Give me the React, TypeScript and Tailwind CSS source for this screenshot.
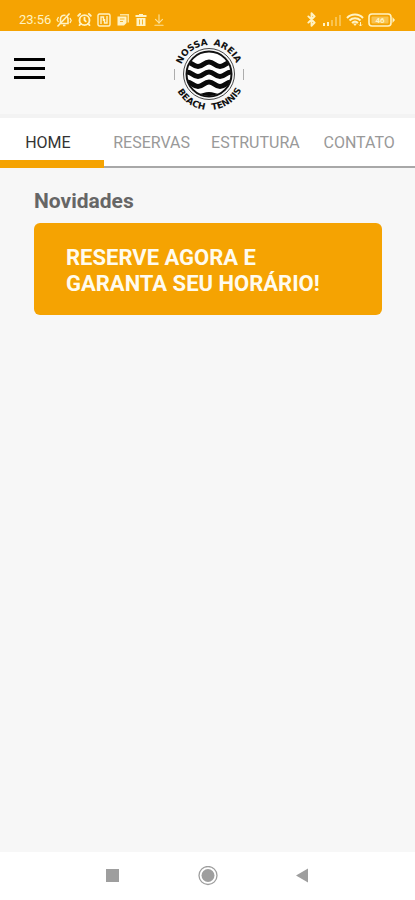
import React from "react";
import { AlarmClock, ArrowDownToLine, Bluetooth } from "lucide-react";

const tabs = ["HOME", "RESERVAS", "ESTRUTURA", "CONTATO"];

const StatusBar = () => {
  return (
    <div className="w-full h-[31px] pt-2 pl-[19px] pr-5 bg-[#f5a302] text-[#fff3c4] flex items-center justify-between">
      <div className="flex items-center gap-[5px]">
        <span className="text-[13px] leading-4">23:56</span>
        <svg width="16" height="16" viewBox="0 0 16 16" fill="none" stroke="currentColor" strokeWidth="1.6">
          <path d="M4.500 11.500h7.500V7a4 4 0 0 0-1-2.500M9.500 3.500A3.600 3.600 0 0 0 4.500 7v4.500M7 13.500h2.500" />
          <path d="M13.500 1.500l-12 13" />
          <path d="M2.500 5L1 8l1.500 2M14 6l1.200 2.500L14 11" strokeWidth="1.200" />
        </svg>
        <AlarmClock size={15} strokeWidth={3} />
        <svg width="14" height="14" viewBox="0 0 14 14" fill="none" stroke="currentColor" strokeWidth="1.4">
          <rect x="1" y="1" width="12" height="12" rx="1.5" />
          <path d="M4 11V4h2.500v4M10 3v7H7.500V6" />
        </svg>
        <svg width="14" height="14" viewBox="0 0 14 14" fill="currentColor">
          <path d="M4 1h9v8.500h-1.500v-7H4z" opacity="0.8" />
          <path d="M1.500 3.500h9V10L8 12.500H1.500z" />
          <path d="M4 6h4.500M4 8.500h3" stroke="#f5a302" strokeWidth="0.8" />
        </svg>
        <svg width="12" height="14" viewBox="0 0 12 14" fill="currentColor">
          <path d="M4 1h4v1h3.500v2H.5V2H4zM1.500 5h9v8h-9z" />
          <path d="M4.500 6.500v5M7.500 6.500v5" stroke="#f5a302" strokeWidth="0.8" />
        </svg>
        <ArrowDownToLine size={14} strokeWidth={2} opacity={0.8} />
      </div>
      <div className="flex items-center gap-1">
        <Bluetooth size={15} strokeWidth={3} />
        <svg width="19" height="12" viewBox="0 0 19 12" fill="currentColor">
          <path d="M0 9h2v3H0zM4 8h2v4H4z" />
          <path d="M8 6h2v6H8zM12 3h2v9h-2zM16 1h2v11h-2z" opacity="0.4" />
        </svg>
        <svg width="18" height="14" viewBox="0 0 18 14" fill="none" stroke="currentColor" strokeWidth="2">
          <path d="M1 5a11 11 0 0 1 16 0M3.500 7.500a8 8 0 0 1 11 0M6 10a4.500 4.500 0 0 1 6 0" />
          <path d="M9 13l-2-2.500h4z" fill="currentColor" stroke="none" />
          <path d="M14.500 9v4M13 11.500l1.500 1.500 1.500-1.500" strokeWidth="1" />
        </svg>
        <svg width="27" height="14" viewBox="0 0 27 14">
          <rect x="1" y="1" width="22" height="12" rx="3" fill="none" stroke="currentColor" strokeWidth="1.6" />
          <path d="M24.500 4l2.500 3-2.500 3z" fill="currentColor" />
          <rect x="3.500" y="3.500" width="17" height="7" rx="1" fill="currentColor" opacity="0.4" />
          <text x="12" y="10" textAnchor="middle" fontSize="8" fontWeight="700" fill="currentColor">
            46
          </text>
        </svg>
      </div>
    </div>
  );
};

const Logo = () => {
  return (
    <svg width="76" height="76" viewBox="0 0 76 76" role="img" aria-label="Nossa Areia Beach Tennis">
      <defs>
        <path id="arc-top" d="M9 38a29 29 0 0 1 58 0" />
        <path id="arc-bottom" d="M2 38a36 36 0 0 0 72 0" />
        <clipPath id="ball">
          <circle cx="38" cy="38" r="22" />
        </clipPath>
      </defs>
      <g fontFamily="'DejaVu Sans', sans-serif" fontWeight="700" fontSize="9" fill="#111" textAnchor="middle">
        <text>
          <textPath href="#arc-top" startOffset="27">NOSSA</textPath>
        </text>
        <text>
          <textPath href="#arc-top" startOffset="65">AREIA</textPath>
        </text>
        <text>
          <textPath href="#arc-bottom" startOffset="35">BEACH</textPath>
        </text>
        <text>
          <textPath href="#arc-bottom" startOffset="78">TENNIS</textPath>
        </text>
      </g>
      <path d="M3.500 33v11M72.500 33v11" stroke="#999" strokeWidth="0.8" />
      <circle cx="38" cy="38" r="25.500" fill="none" stroke="#444" strokeWidth="1" />
      <circle cx="38" cy="38" r="22.500" fill="#fff" stroke="#111" strokeWidth="2" />
      <g clipPath="url(#ball)" fill="none" stroke="#0a0a0a" strokeWidth="5">
        <path d="M14 26h2c5 0 6 4.500 11 4.500s6-4.500 11-4.500 6 4.500 11 4.500 6-4.500 11-4.500h2" />
        <path d="M14 36h2c5 0 6 4.500 11 4.500s6-4.500 11-4.500 6 4.500 11 4.500 6-4.500 11-4.500h2" />
        <path d="M14 46h2c5 0 6 4.500 11 4.500s6-4.500 11-4.500 6 4.500 11 4.500 6-4.500 11-4.500h2" />
        <path d="M26 58c5 0 8-2 12-2s7 2 12 2l-4 4H30z" fill="#0a0a0a" stroke="none" />
      </g>
    </svg>
  );
};

const Header = () => {
  return (
    <header className="w-full h-[87px] pl-4 pr-[14px] pt-[2px] bg-[#f8f8f8] border-b-4 border-[#f3f3f3] grid grid-cols-[1fr_auto_1fr] items-center">
      <button aria-label="Menu" className="w-[31px] -ml-[2px] pb-[10px] flex flex-col gap-[6px]">
        <span className="w-full h-[3px] bg-black" />
        <span className="w-full h-[3px] bg-black" />
        <span className="w-full h-[3px] bg-black" />
      </button>
      <Logo />
    </header>
  );
};

const Tabs = () => {
  return (
    <nav className="w-full h-[50px] bg-white border-b-2 border-[#a8a8a8] grid grid-cols-4">
      {tabs.map((tab, index: number) => {
        return (
          <button
            key={tab}
            className={
              index === 0
                ? "-mb-[2px] pt-2 pr-2 border-b-8 border-[#f5a302] text-base text-[#333]"
                : "-mb-[2px] pt-2 pr-2 border-b-8 border-transparent text-base text-[#999]"
            }
          >
            {tab}
          </button>
        );
      })}
    </nav>
  );
};

const SystemNav = () => {
  return (
    <footer className="w-full h-12 px-[105px] bg-white text-[#9e9e9e] flex items-center justify-between">
      <button aria-label="Recentes">
        <svg width="15" height="20" viewBox="0 0 15 20">
          <rect x="1" y="3" width="13" height="13" fill="currentColor" />
        </svg>
      </button>
      <button aria-label="Início">
        <svg width="20" height="20" viewBox="0 0 20 20">
          <circle cx="10" cy="9.500" r="9" fill="none" stroke="currentColor" strokeWidth="1.3" />
          <circle cx="10" cy="9.500" r="6.500" fill="currentColor" />
        </svg>
      </button>
      <button aria-label="Voltar">
        <svg width="15" height="20" viewBox="0 0 15 20">
          <path d="M1 9.500L13 2.500v14z" fill="currentColor" />
        </svg>
      </button>
    </footer>
  );
};

const App = () => {
  return (
    <div className="w-full min-h-screen bg-[#f7f7f7] font-[Roboto,sans-serif] flex flex-col">
      <StatusBar />
      <Header />
      <Tabs />
      <main className="flex-1 pl-[34px] pr-[33px] pt-5 flex flex-col gap-2">
        <h1 className="text-[21px] leading-[27px] font-bold text-[#666]">Novidades</h1>
        <button className="w-full px-8 pt-[22px] pb-[18px] rounded-md bg-[#f5a302] text-left text-[22px] leading-[26px] font-bold text-[#fffbee]">
          RESERVE AGORA E
          <br />
          GARANTA SEU HORÁRIO!
        </button>
      </main>
      <SystemNav />
    </div>
  );
};

export default App;
